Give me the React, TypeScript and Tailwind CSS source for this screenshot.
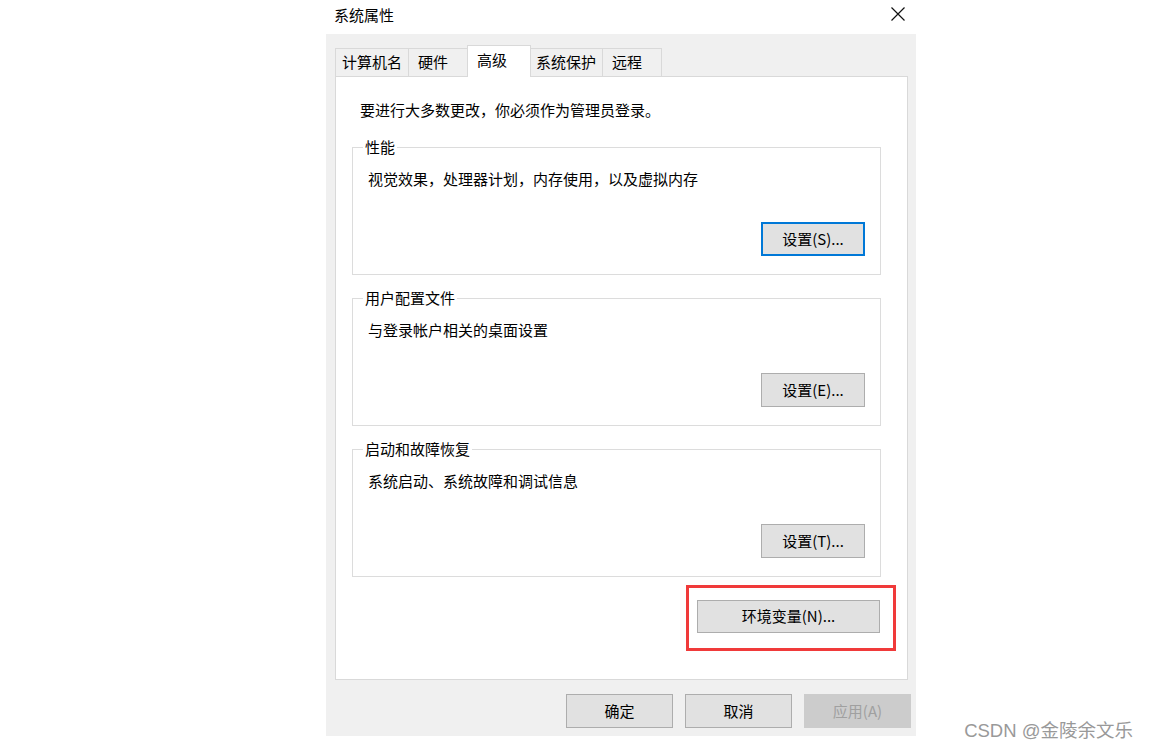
const font = { fontFamily: '"Microsoft YaHei", "Noto Sans CJK SC", "Noto Sans", sans-serif' }

type Tab = { label: string; w: string; active?: boolean }

const tabs: Tab[] = [
  { label: '计算机名', w: 'w-[73px] pl-[6px]' },
  { label: '硬件', w: 'w-[59px] pl-[9px]' },
  { label: '高级', w: 'w-[64px] pl-[9px]', active: true },
  { label: '系统保护', w: 'w-[72px] pl-[5px]' },
  { label: '远程', w: 'w-[59px] pl-[9px]' },
]

function Button({ label, focused, className = '' }: { label: string; focused?: boolean; className?: string }) {
  return (
    <div
      className={
        'flex items-center justify-center bg-[#e1e1e1] text-[15px] text-black ' +
        (focused ? 'border-2 border-[#0078d7] ' : 'border border-[#adadad] ') +
        className
      }
    >
      {label}
    </div>
  )
}

function GroupBox({ title, desc, button, focused }: { title: string; desc: string; button: string; focused?: boolean }) {
  return (
    <div className="relative h-[128px] border border-[#dcdcdc]">
      <div className="absolute left-[10px] top-[-11px] bg-white px-[2px] text-[15px] leading-[20px] text-black">{title}</div>
      <div className="flex h-full flex-col pl-[15px] pr-[15px]">
        <div className="pt-[21px] text-[15px] leading-[20px] text-black">{desc}</div>
        <div className="mt-auto mb-[18px] flex justify-end">
          <Button label={button} focused={focused} className="h-[34px] w-[104px]" />
        </div>
      </div>
    </div>
  )
}

export default function App() {
  return (
    <div className="relative h-[749px] w-full overflow-hidden bg-white" style={font}>
      <div className="ml-[326px] flex w-[590px] flex-col">
        {/* title bar */}
        <div className="flex h-[34px] items-start justify-between pl-[8px] pr-[8px] pt-[4px]">
          <span className="text-[15px] leading-[22px] text-black">系统属性</span>
          <svg width="16" height="16" viewBox="0 0 16 16" className="mt-[2px] mr-[2px]">
            <path d="M1.5 1.5 L14.5 14.5 M14.5 1.5 L1.5 14.5" stroke="#111" strokeWidth="1.2" fill="none" />
          </svg>
        </div>

        {/* body */}
        <div className="flex h-[702px] flex-col bg-[#f0f0f0] pl-[9px] pr-[5px]">
          <div className="flex items-end pt-[11px]">
            {tabs.map((t, i) => (
              <div
                key={t.label}
                className={
                  t.w +
                  ' flex border-[#d9d9d9] text-[15px] leading-[20px] text-black ' +
                  (t.active
                    ? 'relative z-10 -mb-px h-[32px] border-x border-t bg-white pt-[4px]'
                    : 'h-[28px] border-t bg-[#f0f0f0] pt-[3px] ' + (i === 0 ? 'border-l ' : '') + (i === tabs.length - 1 ? 'border-r ' : '') + (i === 1 ? 'border-l' : '') + (i === 3 ? 'border-r' : ''))
                }
              >
                {t.label}
              </div>
            ))}
          </div>

          {/* panel */}
          <div className="flex h-[604px] w-[573px] flex-col border border-[#d9d9d9] bg-white">
            <div className="pl-[24px] pt-[23px] text-[15px] leading-[20px] text-black">要进行大多数更改，你必须作为管理员登录。</div>
            <div className="mt-[27px] flex flex-col gap-[23px] pl-[16px] pr-[26px]">
              <GroupBox title="性能" desc="视觉效果，处理器计划，内存使用，以及虚拟内存" button="设置(S)..." focused />
              <GroupBox title="用户配置文件" desc="与登录帐户相关的桌面设置" button="设置(E)..." />
              <GroupBox title="启动和故障恢复" desc="系统启动、系统故障和调试信息" button="设置(T)..." />
            </div>
            <div className="mt-[23px] flex justify-end pr-[27px]">
              <div className="relative">
                <Button label="环境变量(N)..." className="h-[33px] w-[183px]" />
                <div className="absolute left-[-11px] right-[-16px] top-[-15px] bottom-[-18px] border-[3px] border-[#f03a3a]" />
              </div>
            </div>
          </div>

          <div className="mt-[14px] flex justify-end gap-[12px]">
            <Button label="确定" className="h-[34px] w-[107px]" />
            <Button label="取消" className="h-[34px] w-[107px]" />
            <div className="flex h-[34px] w-[107px] items-center justify-center border border-[#cccccc] bg-[#cccccc] text-[15px] text-[#a0a0a0]">
              应用(A)
            </div>
          </div>
        </div>
      </div>

      <div
        className="absolute bottom-[5px] right-[16px] text-[18.5px] leading-[26px] text-[#999999]"
        style={{ fontFamily: '"Liberation Sans", "Noto Sans CJK SC", sans-serif' }}
      >
        CSDN @金陵余文乐
      </div>
    </div>
  )
}
